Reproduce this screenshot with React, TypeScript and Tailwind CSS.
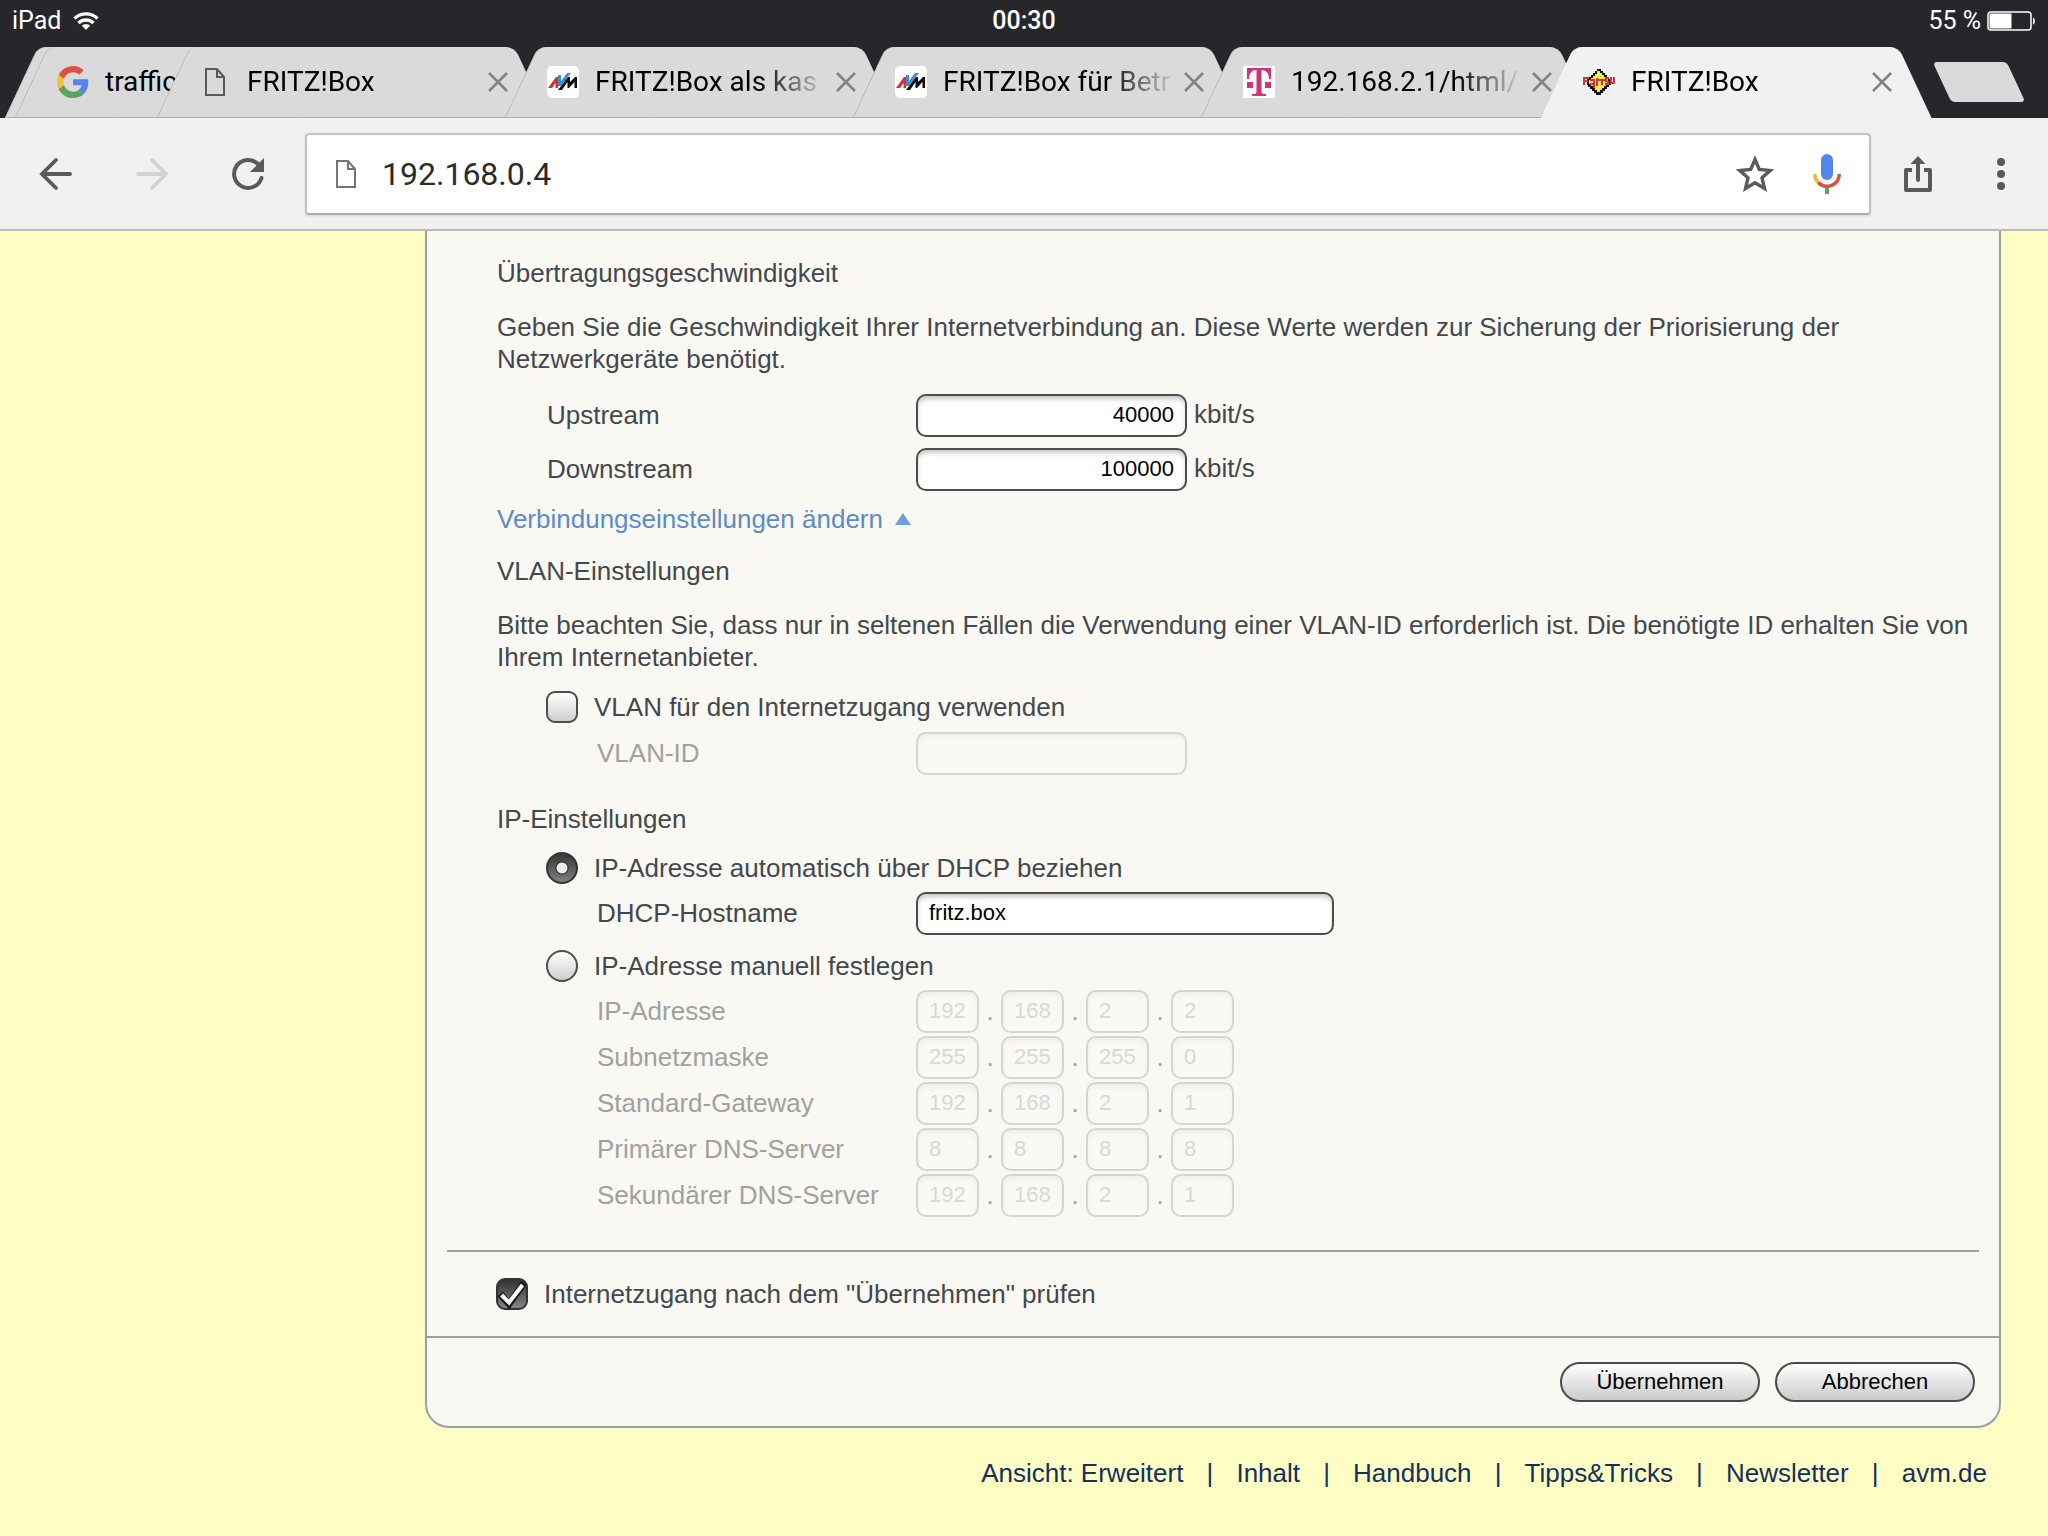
import clsx from "clsx";

const ARIAL = "font-['Liberation_Sans',Arial,sans-serif]";
const ROBOTO = "font-[Roboto,sans-serif]";

const PageIcon = ({ className }: { className?: string }) => (
  <svg className={className} width="20" height="28" viewBox="0 0 20 28" fill="none" stroke="currentColor" strokeWidth="2">
    <path d="M1 1H12L19 9V27H1Z" />
    <path d="M12 1V9H19" />
  </svg>
);

const GoogleIcon = () => (
  <svg width="32" height="32" viewBox="0 0 48 48">
    <path fill="#db5144" d="M24 9.5c3.54 0 6.71 1.22 9.21 3.6l6.85-6.85C35.9 2.38 30.47 0 24 0 14.62 0 6.51 5.38 2.56 13.22l7.98 6.19C12.43 13.72 17.74 9.5 24 9.5z" />
    <path fill="#5286ee" d="M46.98 24.55c0-1.57-.15-3.09-.38-4.55H24v9.02h12.94c-.58 2.96-2.26 5.48-4.78 7.18l7.73 6c4.51-4.18 7.09-10.36 7.09-17.65z" />
    <path fill="#f3be42" d="M10.53 28.59c-.48-1.45-.76-2.99-.76-4.59s.27-3.14.76-4.59l-7.98-6.19C.92 16.46 0 20.12 0 24c0 3.88.92 7.54 2.56 10.78l7.97-6.19z" />
    <path fill="#58a65c" d="M24 48c6.48 0 11.93-2.13 15.89-5.81l-7.73-6c-2.15 1.45-4.92 2.3-8.16 2.3-6.26 0-11.57-4.22-13.47-9.91l-7.98 6.19C6.51 42.62 14.62 48 24 48z" />
  </svg>
);

const AvmIcon = () => (
  <svg width="32" height="32" viewBox="0 0 32 32">
    <rect width="32" height="32" rx="5" fill="#fff" />
    <path d="M1 22L9 11H11V22H8.500V17L5 22Z" fill="#d8302f" />
    <path d="M11 9H14V15L20 7H24L14 20H11Z" fill="#3f8fd0" />
    <path d="M11 24L21 11H23V16L28 11H30V22H27.500V16L22 22H20.500V16L15 24Z" fill="#111" />
  </svg>
);

const TelekomIcon = () => (
  <svg width="32" height="32" viewBox="0 0 32 32">
    <rect width="32" height="32" fill="#fff" />
    <path d="M4 2H28V13H26C26 7 23 4 18.500 4V25C18.500 28 20 28 23 28V30H9V28C12 28 13.500 28 13.500 25V4C9 4 6 7 6 13H4Z" fill="#d0337a" />
    <path d="M4 16H10V22H4ZM22 16H28V22H22Z" fill="#d0337a" />
  </svg>
);

const FritzIcon = () => (
  <svg width="32" height="32" viewBox="0 0 32 32">
    <path d="M14 3H18V5H20V7H22V9H24V11H26V13H28V19H26V21H24V23H22V25H20V27H18V29H13V27H11V25H9V23H7V21H5V19H4V13H6V11H8V9H10V7H12V5H14Z" fill="#111" />
    <path d="M14 5H17V7H19V9H21V11H23V13H25V18H23V20H21V22H19V24H17V26H14V24H12V22H10V20H8V18H6V14H8V12H10V10H12V8H14Z" fill="#fbe64a" />
    <path d="M0 11H6V13H2V14H5V16H2V19H0ZM7 13H12V22H10V19H7V17H10V15H7ZM13 12H15V20H13ZM15 13H22V15H20V19H18V15H15ZM22 11H26V13H24V15H26V19H22V17H24V16H22ZM27 11H29V16H30V11H32V18H27Z" fill="#c8383f" />
  </svg>
);

type TabProps = {
  title: string;
  icon?: React.ReactNode;
  active?: boolean;
  className?: string;
  closable?: boolean;
};

// The slanted sides are two skewed halves behind the tab's content.
const Tab = ({ title, icon, active, className, closable = true }: TabProps) => (
  <div
    className={clsx(
      "relative isolate flex h-[71px] shrink-0 items-center pb-[2px]",
      "before:absolute before:inset-y-0 before:left-[17px] before:right-1/2 before:-z-10 before:-skew-x-25 before:rounded-tl-lg before:border-l before:content-['']",
      "after:absolute after:inset-y-0 after:right-[17px] after:left-1/3 after:-z-10 after:skew-x-25 after:rounded-tr-lg after:content-['']",
      active
        ? "z-10 before:border-[#f1f1f1] before:bg-[#f1f1f1] after:bg-[#f1f1f1]"
        : "before:border-b before:border-[#b0b0b0] before:bg-[#dadada] after:border-b after:border-[#b0b0b0] after:bg-[#dadada]",
      className
    )}
  >
    {icon}
    <span
      className={clsx(
        "ml-4 flex-1 overflow-hidden whitespace-nowrap text-[28px] text-black",
        closable && "mask-r-from-70% mask-r-to-100%"
      )}
    >
      {title}
    </span>
    {closable && (
      <button aria-label={title + " schließen"} className="ml-2 text-[#828282]">
        <svg width="20" height="20" viewBox="0 0 20 20" stroke="currentColor" strokeWidth="2.500">
          <path d="M1 1L19 19M19 1L1 19" />
        </svg>
      </button>
    )}
  </div>
);

const StatusBar = () => (
  <div className="grid h-[47px] grid-cols-3 items-center px-3 pb-[6px] text-[25px] text-white">
    <div className="flex items-center gap-3">
      iPad
      <svg width="26" height="20" viewBox="0 0 26 20" fill="none" stroke="#fff" strokeWidth="3.400">
        <path d="M1.500 7.500A16.500 16.500 0 0 1 24.500 7.500" />
        <path d="M5.500 12A11 11 0 0 1 20.500 12" />
        <path d="M13 19L8.800 14.600A6 6 0 0 1 17.200 14.600Z" fill="#fff" stroke="none" />
      </svg>
    </div>
    <div className="text-center font-medium">00:30</div>
    <div className="flex items-center justify-end gap-[6px]">
      55 %
      <svg width="49" height="20" viewBox="0 0 49 20">
        <rect x="1" y="1" width="43" height="18" rx="3" fill="none" stroke="#fff" strokeWidth="1.500" />
        <rect x="2.500" y="2.500" width="22" height="15" rx="1" fill="#fff" />
        <path d="M46 6.500C48.500 7 48.500 13 46 13.500Z" fill="#fff" />
      </svg>
    </div>
  </div>
);

const TabStrip = () => (
  <div className="flex h-[71px] overflow-hidden pl-1">
    <Tab title="" closable={false} className="w-[260px]" />
    <Tab title="traffic" icon={<GoogleIcon />} closable={false} className="-ml-[250px] w-[260px] pl-[43px] pr-[80px]" />
    <Tab title="FRITZ!Box" icon={<PageIcon className="mx-[6px] text-[#5a5a5a]" />} className="-ml-[118px] w-[392px] pl-[43px] pr-[40px]" />
    <Tab title="FRITZ!Box als kas" icon={<AvmIcon />} className="-ml-[44px] w-[392px] pl-[43px] pr-[40px]" />
    <Tab title="FRITZ!Box für Betr" icon={<AvmIcon />} className="-ml-[44px] w-[392px] pl-[43px] pr-[40px]" />
    <Tab title="192.168.2.1/html/" icon={<TelekomIcon />} className="-ml-[44px] w-[392px] pl-[43px] pr-[40px]" />
    <Tab title="FRITZ!Box" icon={<FritzIcon />} active className="-ml-[52px] w-[392px] pl-[43px] pr-[40px]" />
    <button aria-label="Neuer Tab" className="mt-[15px] ml-[10px] h-10 w-[74px] skew-x-25 rounded-sm bg-[#dadada]" />
  </div>
);

const Toolbar = () => (
  <div className="flex h-[113px] items-center border-b-2 border-[#bdbcb4] bg-[#f1f1f1] pr-[43px] pl-[39px] text-[#5a5a5a]">
    <button aria-label="Zurück">
      <svg width="34" height="34" viewBox="0 0 34 34" fill="none" stroke="currentColor" strokeWidth="3.800" strokeLinecap="round">
        <path d="M31 17H4M17 3L3 17L17 31" />
      </svg>
    </button>
    <button aria-label="Vorwärts" className="ml-[62px] text-[#d3d3d3]">
      <svg width="34" height="34" viewBox="0 0 34 34" fill="none" stroke="currentColor" strokeWidth="3.800" strokeLinecap="round">
        <path d="M3 17H30M17 3L31 17L17 31" />
      </svg>
    </button>
    <button aria-label="Neu laden" className="ml-[62px]">
      <svg width="34" height="34" viewBox="0 0 34 34" fill="none" stroke="currentColor" strokeWidth="4">
        <path d="M30.500 21A14 14 0 1 1 27 7" strokeLinecap="round" />
        <path d="M33 1V15H19Z" fill="currentColor" stroke="none" />
      </svg>
    </button>
    <div className="ml-[40px] flex h-[82px] flex-1 items-center rounded border-2 border-[#c3c3c3] border-b-[#adadad] bg-white pr-[28px] pl-[29px] shadow-sm">
      <PageIcon className="text-[#757575]" />
      <input
        aria-label="Adresse"
        defaultValue="192.168.0.4"
        className="ml-[26px] min-w-0 flex-1 text-[32px] text-[#2b2b2b] outline-none"
      />
      <button aria-label="Lesezeichen">
        <svg width="40" height="38" viewBox="0 0 40 38" fill="none" stroke="currentColor" strokeWidth="3.400">
          <path d="M20 4.500L24.300 14.500L35.200 15.500L27 22.800L29.500 33.500L20 27.800L10.500 33.500L13 22.800L4.800 15.500L15.700 14.500Z" />
        </svg>
      </button>
      <button aria-label="Sprachsuche" className="ml-[38px]">
        <svg width="28" height="40" viewBox="0 0 28 40" fill="none" strokeWidth="3.500">
          <rect x="8" width="12" height="26" rx="6" fill="#5286ee" />
          <path d="M1.750 20A12.250 12.250 0 0 0 5.300 28.600" stroke="#f0b93e" />
          <path d="M5.300 28.600A12.250 12.250 0 0 0 26.250 20" stroke="#db5144" />
          <path d="M14 34V40" stroke="#58a65c" strokeWidth="4" />
        </svg>
      </button>
    </div>
    <button aria-label="Teilen" className="ml-[33px]">
      <svg width="28" height="36" viewBox="0 0 28 36" fill="none" stroke="currentColor" strokeWidth="4">
        <path d="M8 14H2V34H26V14H20" strokeLinejoin="round" />
        <path d="M14 24V6" strokeLinecap="round" />
        <path d="M14 0L21.500 8H6.500Z" fill="currentColor" stroke="none" />
      </svg>
    </button>
    <button aria-label="Menü" className="ml-[65px]">
      <svg width="8" height="32" viewBox="0 0 8 32" fill="currentColor">
        <circle cx="4" cy="4" r="4" />
        <circle cx="4" cy="16" r="4" />
        <circle cx="4" cy="28" r="4" />
      </svg>
    </button>
  </div>
);

const fieldClass =
  "h-[43px] rounded-[10px] border-2 border-[#4c4c4c] bg-white px-[11px] text-[22px] text-black shadow-[inset_0_4px_5px_-1px_#c8c8c8] disabled:border-[#d5d5d1] disabled:bg-[#faf9f5] disabled:text-[#d8d8d4] disabled:shadow-[inset_0_4px_5px_-1px_#ededea]";

const radioClass =
  "size-8 shrink-0 appearance-none rounded-full border-2 border-[#4c4c4c] bg-linear-to-b from-white to-[#cfcfcf] checked:border-[#333] checked:bg-[radial-gradient(circle,#ececec_5px,#222_6px,transparent_7px),linear-gradient(#333,#858585)] checked:bg-origin-border";

const checkClass =
  "peer size-8 appearance-none rounded-[9px] border-2 border-[#4c4c4c] bg-linear-to-b from-white to-[#cfcfcf] checked:border-[#333] checked:from-[#333] checked:to-[#858585]";

const SpeedRow = ({ id, label, value }: { id: string; label: string; value: string }) => (
  <div className="flex h-[54px] items-center pl-[50px]">
    <label htmlFor={id} className="w-[369px]">
      {label}
    </label>
    <input id={id} defaultValue={value} className={clsx(fieldClass, "w-[271px] text-right")} />
    <span className="ml-[7px] pb-[2px]">kbit/s</span>
  </div>
);

const addresses = [
  { label: "IP-Adresse", parts: ["192", "168", "2", "2"] },
  { label: "Subnetzmaske", parts: ["255", "255", "255", "0"] },
  { label: "Standard-Gateway", parts: ["192", "168", "2", "1"] },
  { label: "Primärer DNS-Server", parts: ["8", "8", "8", "8"] },
  { label: "Sekundärer DNS-Server", parts: ["192", "168", "2", "1"] },
];

const AddressRow = ({ label, parts }: { label: string; parts: string[] }) => (
  <div role="group" aria-label={label} className="flex h-[46px] items-center pl-[100px] text-[#a0a19f]">
    <span className="w-[319px]">{label}</span>
    {parts.map((part, i) => (
      <div key={i} className="flex items-center">
        {i > 0 && <span className="w-[22px] text-center">.</span>}
        <input
          disabled
          aria-label={label + " " + (i + 1)}
          defaultValue={part}
          className={clsx(fieldClass, "w-[63px]")}
        />
      </div>
    ))}
  </div>
);

const links = ["Ansicht: Erweitert", "Inhalt", "Handbuch", "Tipps&Tricks", "Newsletter", "avm.de"];

const SettingsPage = () => (
  <main className={clsx("pr-[47px] pb-10 pl-[425px] text-[26px] leading-8 text-[#43484e]", ARIAL)}>
    <form className="rounded-b-[24px] border-2 border-t-0 border-[#94a4a6] bg-[#f9f8f3]">
      <div className="pt-[26px] pr-5 pl-[70px]">
        <h2>Übertragungsgeschwindigkeit</h2>
        <p className="mt-[22px]">
          Geben Sie die Geschwindigkeit Ihrer Internetverbindung an. Diese Werte werden zur Sicherung der Priorisierung
          der Netzwerkgeräte benötigt.
        </p>
        <div className="mt-[13px]">
          <SpeedRow id="upstream" label="Upstream" value="40000" />
          <SpeedRow id="downstream" label="Downstream" value="100000" />
        </div>
        <a href="#verbindung" className="mt-[7px] flex items-center gap-3 text-[#5b8cc8]">
          Verbindungseinstellungen ändern
          <svg width="16" height="12" viewBox="0 0 16 12">
            <path d="M8 0L16 12H0Z" fill="#6f9fd8" />
          </svg>
        </a>
        <h2 className="mt-5">VLAN-Einstellungen</h2>
        <p className="mt-[22px]">
          Bitte beachten Sie, dass nur in seltenen Fällen die Verwendung einer VLAN-ID erforderlich ist. Die benötigte
          ID erhalten Sie von Ihrem Internetanbieter.
        </p>
        <label className="mt-[18px] flex items-center gap-4 pl-[49px]">
          <input type="checkbox" className={checkClass} />
          VLAN für den Internetzugang verwenden
        </label>
        <div className="mt-[7px] flex h-[46px] items-center pl-[100px]">
          <label htmlFor="vlan-id" className="w-[319px] text-[#a0a19f]">
            VLAN-ID
          </label>
          <input id="vlan-id" disabled className={clsx(fieldClass, "w-[271px]")} />
        </div>
        <h2 className="mt-[27px]">IP-Einstellungen</h2>
        <label className="mt-[17px] flex items-center gap-4 pl-[49px]">
          <input type="radio" name="ip" defaultChecked className={radioClass} />
          IP-Adresse automatisch über DHCP beziehen
        </label>
        <div className="mt-[6px] flex h-[46px] items-center pl-[100px]">
          <label htmlFor="hostname" className="w-[319px]">
            DHCP-Hostname
          </label>
          <input id="hostname" defaultValue="fritz.box" className={clsx(fieldClass, "w-[418px]")} />
        </div>
        <label className="mt-[14px] flex items-center gap-4 pl-[49px]">
          <input type="radio" name="ip" className={radioClass} />
          IP-Adresse manuell festlegen
        </label>
        <div className="mt-[6px]">
          {addresses.map((address) => (
            <AddressRow key={address.label} {...address} />
          ))}
        </div>
      </div>
      <div className="mx-5 mt-[32px] border-t-2 border-[#94a4a6] pt-[26px] pb-[26px] pl-[49px]">
        <label className="flex items-center gap-4">
          <span className="relative flex">
            <input type="checkbox" defaultChecked className={checkClass} />
            <svg className="pointer-events-none absolute inset-0 hidden peer-checked:block" width="32" height="32" viewBox="0 0 32 32" fill="none">
              <path d="M4 16L13 26L28 5" stroke="#1c1c1c" strokeWidth="7" />
              <path d="M5.500 17L13 24.500L26.500 7" stroke="#fff" strokeWidth="4" />
            </svg>
          </span>
          Internetzugang nach dem "Übernehmen" prüfen
        </label>
      </div>
      <div className="flex justify-end gap-[15px] border-t-2 border-[#94a4a6] py-6 pr-6">
        {["Übernehmen", "Abbrechen"].map((name) => (
          <button
            key={name}
            type="button"
            className="h-10 w-[200px] rounded-full border-2 border-[#4c4c4c] bg-linear-to-b from-white to-[#cbcbcb] text-[22px] text-black"
          >
            {name}
          </button>
        ))}
      </div>
    </form>
    <nav className="mt-[29px] flex justify-end pr-[14px] text-[#14305e]">
      {links.map((link, i) => (
        <span key={link} className="flex">
          {i > 0 && <span className="w-[53px] text-center">|</span>}
          <a href="#">{link}</a>
        </span>
      ))}
    </nav>
  </main>
);

export default function App() {
  return (
    <div className={clsx("min-h-screen bg-[#fefdc3]", ROBOTO)}>
      <header className="bg-[#27262b]">
        <StatusBar />
        <TabStrip />
        <Toolbar />
      </header>
      <SettingsPage />
    </div>
  );
}
